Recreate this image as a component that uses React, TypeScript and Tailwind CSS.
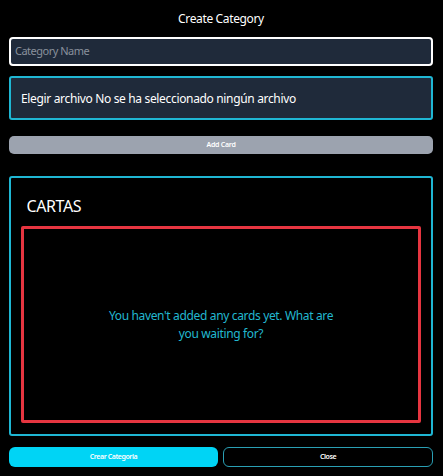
export default function App() {
  return (
    <div className="flex h-[476px] w-[443px] flex-col bg-black pr-[10px] pl-[9px] font-['Noto_Sans','Open_Sans',sans-serif] text-white">
      <h1 className="mt-[10px] text-center text-[12px] leading-[18px] tracking-[-0.36px]">Create Category</h1>
      <input className="mt-[9px] h-[29px] w-full shrink-0 rounded border-2 border-white bg-[#1f2a3a] px-1 pb-[2px] text-[11px] tracking-[-0.5px] placeholder:text-[#89909c]" placeholder="Category Name" />
      <div className="mt-[10px] flex h-[44px] shrink-0 items-center rounded-[3px] border-2 border-[#1fb6d3] bg-[#1f2a3a] px-[10px] pt-[2px] text-[12px] tracking-[-0.34px] whitespace-nowrap">Elegir archivo No se ha seleccionado ningún archivo</div>
      <button className="mt-4 h-[18px] shrink-0 rounded-[5px] bg-[#9ca3af] text-[7px] font-semibold tracking-[-0.25px]">Add Card</button>
      <section className="mt-[22px] flex h-[260px] shrink-0 flex-col rounded-[3px] border-2 border-[#1fb6d3] px-[10px] pb-[11px]">
        <h2 className="mt-[16px] ml-[5.5px] text-[16px] leading-[24px] tracking-[-0.4px]">CARTAS</h2>
        <div className="mt-[8px] flex flex-1 items-center justify-center rounded-[2px] border-[3px] border-[#e63540] text-center text-[12px] leading-[18px] tracking-[-0.35px] text-[#22b8d0]">
          <p>You haven't added any cards yet. What are<br />you waiting for?</p>
        </div>
      </section>
      <div className="mt-[11px] flex gap-[5px] text-[7px] font-semibold tracking-[-0.42px]">
        <button className="h-5 w-[209px] rounded-md bg-[#00d4f5]">Crear Categoria</button>
        <button className="h-5 flex-1 rounded-md border border-[#2a9fb4]">Close</button>
      </div>
    </div>
  );
}
